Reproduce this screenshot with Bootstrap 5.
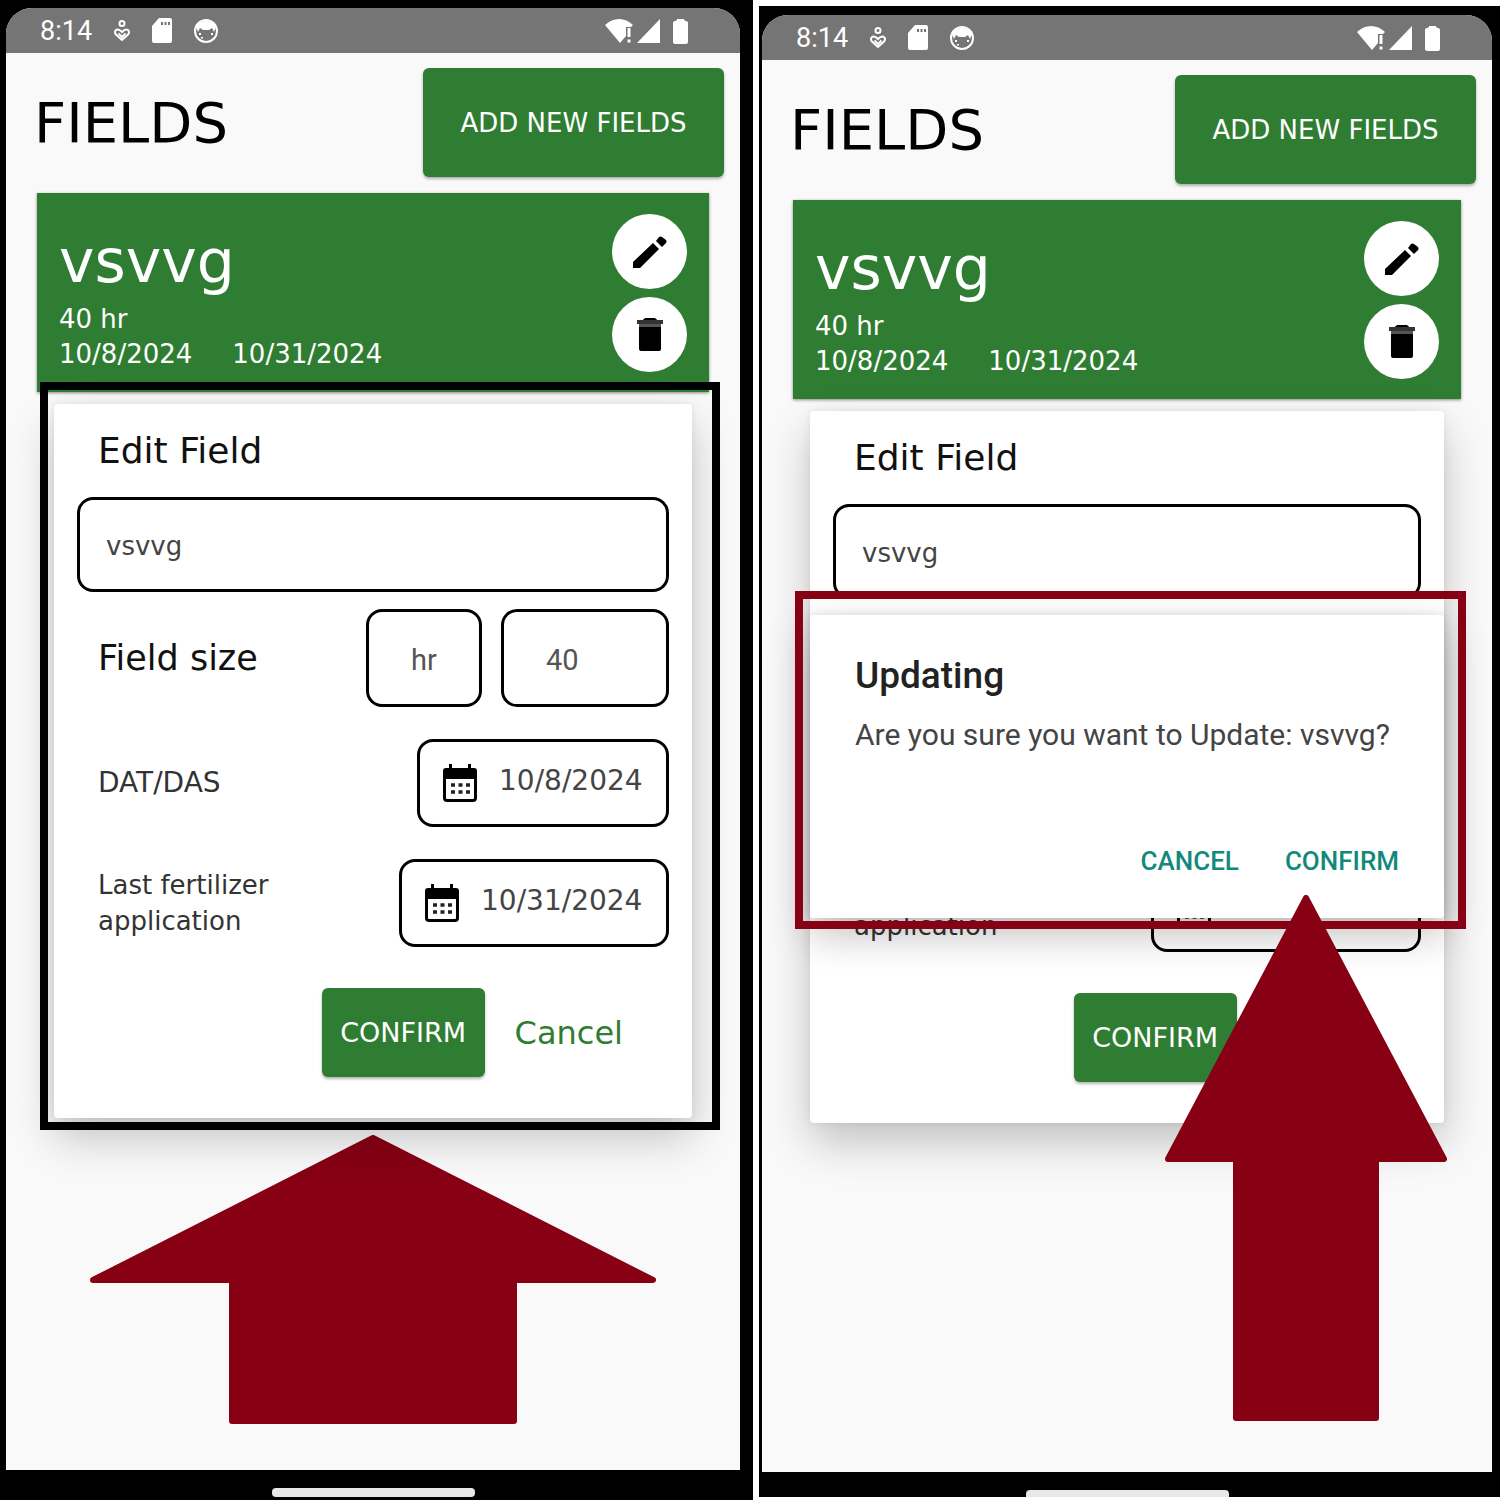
<!DOCTYPE html>
<html lang="en">
<head>
<meta charset="utf-8">
<meta name="viewport" content="width=device-width, initial-scale=1">
<title>Fields</title>
<link href="https://cdn.jsdelivr.net/npm/bootstrap@5.3.0/dist/css/bootstrap.min.css" rel="stylesheet">
<style>
:root { --leaf: #2f7d32; --marker: #870014; --ui: "DejaVu Sans", sans-serif; }
body { font-family: var(--ui); font-size: 26px; line-height: 36px; color: #000; background: #fff; }
button, input, select { font-family: inherit; }
.stage { min-height: 100vh; gap: 6px; }
.phone { background: #000; flex: 734 1 0; min-width: 0; padding: 8px 13px 0 6px; }
.phone-b { flex-grow: 730; margin: 6px 0 3px; padding: 9px 8px 0 3px; }
.viewport { background: #f9f9f9; border-radius: 26px 26px 0 0; overflow: hidden; }
.statusbar { background: #757575; color: #fff; height: 45px; padding: 0 52px 0 34px; font: 27px/44px Roboto, sans-serif; }
.status-left { gap: 21px; }
.status-right { gap: 4px; }
.battery { margin-left: 9px; }
.top-title { font-size: 56px; line-height: 64px; font-weight: 400; }
.top-area { padding: 15px 16px 16px 28px; }
.btn-leaf { background: var(--leaf); color: #fff; border: 0; border-radius: 6px; font-size: 26px; box-shadow: 0 2px 3px rgba(0,0,0,.3); }
.btn-leaf:hover { background: #276a2a; color: #fff; }
.btn-add { width: 301px; height: 109px; padding: 2px 0 0; }
.field-item { background: var(--leaf); color: #fff; margin: 0 31px 12px; height: 199px; padding: 21px 22px 0; box-shadow: 0 1px 3px rgba(0,0,0,.45); }
.field-text { padding-top: 6px; }
.field-name { font-size: 60px; line-height: 82px; font-weight: 400; }
.field-item .meta { line-height: 35px; }
.round-btn { width: 75px; height: 75px; border-radius: 50%; background: #fff; }
.edit-wrap { margin: 0 48px; }
.edit-form { background: #fff; border-radius: 4px; padding: 0 23px 41px; box-shadow: 0 20px 44px rgba(0,0,0,.22), 0 0 8px rgba(0,0,0,.08); }
.edit-form h2 { font-size: 36px; line-height: 93px; font-weight: 400; margin: 0; padding-left: 21px; color: #111; }
.edit-form label { padding-left: 21px; color: #333; }
.edit-form .size-label { font-size: 35px; color: #111; }
.edit-form .das-label { font-size: 28px; }
.boxed { border: 3px solid #000; border-radius: 16px; background: #fff; color: #444; outline: 0; }
.name-box { height: 95px; padding: 3px 26px 0; }
.size-row { margin-top: 17px; gap: 19px; }
.unit-box, .amount-box { height: 98px; font-family: Roboto, sans-serif; font-size: 29px; font-weight: 400; color: #555; appearance: none; padding: 3px 0 0 42px; }
.unit-box { width: 116px; }
.amount-box { width: 168px; }
.date-row { margin-top: 32px; }
.date-box { width: 252px; height: 88px; padding: 0 12px 0 23px; gap: 22px; }
.date-box.wide { width: 270px; }
.date-box input { font-size: 28px; line-height: 36px; border: 0; padding: 0; outline: 0; flex: 1; min-width: 0; color: #444; background: transparent; margin-bottom: 5px; }
.actions { margin-top: 41px; padding-right: 46px; gap: 30px; }
.btn-ok { width: 163px; height: 89px; padding: 2px 0 0; font-size: 27px; }
.btn-plain { font-size: 32px; color: var(--leaf); padding: 0; border: 0; }
.phone-b .date-row { margin-top: 31px; }
.marker-frame { position: absolute; border: 8px solid #000; pointer-events: none; }
.around-form { inset: -22px -28px -12px -14px; }
.around-dialog { inset: -24px -22px -11px -15px; border-color: var(--marker); }
.arrow-up { display: block; margin: 17px auto 0; }
.ask { position: absolute; top: 204px; left: 0; right: 0; height: 303px; background: #fff; border-radius: 3px; padding: 38px 34px 33px 45px; font-family: Roboto, sans-serif; box-shadow: 0 16px 40px rgba(0,0,0,.26), 0 0 8px rgba(0,0,0,.1); }
.ask h3 { font-size: 37px; line-height: 46px; font-weight: 500; color: #222; margin: 0 0 16px; }
.ask p { font-size: 30px; line-height: 40px; color: #444; white-space: nowrap; margin: 0; }
.ask .btn { font-size: 26px; line-height: 36px; font-weight: 500; color: #12897b; border: 0; padding: 2px 11px 6px; font-family: Roboto, sans-serif; }
.arrow-tall { position: absolute; top: 280px; right: -3px; pointer-events: none; }
.navzone { height: 30px; padding-top: 18px; }
.phone-b .navzone { height: 25px; }
.pill { width: 203px; height: 9px; border-radius: 4px; background: #e8e8e8; }
.phone-b .pill { height: 7px; border-radius: 4px 4px 0 0; }
</style>
<script src="https://cdn.jsdelivr.net/npm/bootstrap@5.3.0/dist/js/bootstrap.bundle.min.js"></script>
</head>
<body>
<svg width="0" height="0" class="position-absolute" aria-hidden="true">
  <symbol id="i-care" viewBox="0 0 18 24"><g fill="none" stroke="#fff" stroke-width="2"><circle cx="9" cy="4.500" r="2.500"/><path d="M9 21 3 15.500C0 12 4 8 9 13c5-5 9-1 6 2.500z"/><path d="M5.500 14.500 9 18l3.500-3.500"/></g></symbol>
  <symbol id="i-sd" viewBox="0 0 20 26"><path fill="#fff" d="M7 0h11a2 2 0 0 1 2 2v21a2 2 0 0 1-2 2H2a2 2 0 0 1-2-2V8z"/><path stroke="#757575" stroke-width="3" d="M9 5.500h2M12.500 5.500h2M16 5.500h2"/></symbol>
  <symbol id="i-cat" viewBox="0 0 26 26"><circle cx="13" cy="13" r="11" fill="none" stroke="#fff" stroke-width="2"/><path fill="#fff" d="M3 9C6 1 20 1 23 9l-2 5-2-4-3 2h-6L7 10l-2 4z"/><path fill="#fff" d="M6 15h2v2H6zM8 19h2v1.500H8zM18 15h2v2h-2z"/></symbol>
  <symbol id="i-wifi" viewBox="0 0 28 26"><path fill="#fff" d="M0 7C8-1 20-1 28 7l-2 2h-5v9l-6 7z"/><path stroke="#757575" stroke-width="5" d="M24 9v17"/><path stroke="#fff" stroke-width="3" d="M24 10v9M24 21.500v3"/></symbol>
  <symbol id="i-cell" viewBox="0 0 23 24"><path fill="#fff" d="M23 0v24H0z"/></symbol>
  <symbol id="i-batt" viewBox="0 0 15 26"><path fill="#fff" d="M4 2V1h7v1l4 2v20a2 2 0 0 1-2 2H2a2 2 0 0 1-2-2V4z"/></symbol>
  <symbol id="i-pen" viewBox="0 0 36 36"><path d="M1 34v-6L21 9l6 6L8 34zM24 7l3-4q1-1 3 0l4 3q1 2 0 3l-4 4z"/></symbol>
  <symbol id="i-bin" viewBox="0 0 26 33"><path fill="#333" d="M0 2h6l1-1h12l1 1h6v4H0z"/><path fill="#555" d="M2 6h22v4H2z"/><path d="M6 2 8 0h10l2 2zM2 9h22v22q0 2-2 2H4q-2 0-2-2z"/></symbol>
  <symbol id="i-cal" viewBox="0 0 34 38"><path d="M6 0h3v4h16V0h3v4h3q3 0 3 3v27q0 4-4 4H4q-4 0-4-4V7q0-3 3-3h3zM3 15v19q0 1 1 1h26q1 0 1-1V15z" fill-rule="evenodd"/><path d="M8 21h19M8 28h19" stroke="#222" stroke-width="3.500" stroke-dasharray="4 3.500"/></symbol>
</svg>

<main class="stage d-flex">
  <section class="phone d-flex flex-column">
    <div class="viewport flex-grow-1">
      <div class="statusbar d-flex align-items-center justify-content-between">
        <div class="status-left d-flex align-items-center">
          <span>8:14</span>
          <svg width="18" height="24"><use href="#i-care"/></svg>
          <svg width="20" height="26"><use href="#i-sd"/></svg>
          <svg width="26" height="26"><use href="#i-cat"/></svg>
        </div>
        <div class="status-right d-flex align-items-center">
          <svg width="28" height="26"><use href="#i-wifi"/></svg>
          <svg width="23" height="24"><use href="#i-cell"/></svg>
          <svg class="battery" width="15" height="26"><use href="#i-batt"/></svg>
        </div>
      </div>
      <header class="top-area d-flex justify-content-between align-items-center">
        <h1 class="top-title m-0">FIELDS</h1>
        <button type="button" class="btn btn-leaf btn-add">ADD NEW FIELDS</button>
      </header>
      <article class="field-item d-flex justify-content-between">
        <div class="field-text">
          <h2 class="field-name m-0">vsvvg</h2>
          <div class="meta">40 hr</div>
          <div class="meta d-flex gap-4"><span class="me-3">10/8/2024</span><span>10/31/2024</span></div>
        </div>
        <div class="d-flex flex-column gap-2">
          <button type="button" class="btn round-btn p-0 border-0" aria-label="Edit"><svg width="36" height="36"><use href="#i-pen"/></svg></button>
          <button type="button" class="btn round-btn p-0 border-0" aria-label="Delete"><svg width="26" height="33"><use href="#i-bin"/></svg></button>
        </div>
      </article>
      <div class="edit-wrap position-relative">
        <form class="edit-form">
          <h2>Edit Field</h2>
          <input class="boxed name-box w-100 d-block" aria-label="Field name" value="vsvvg">
          <div class="size-row d-flex align-items-center">
            <label class="size-label me-auto" for="amount-a">Field size</label>
            <select class="boxed unit-box" aria-label="Unit"><option>hr</option></select>
            <input class="boxed amount-box" id="amount-a" value="40">
          </div>
          <div class="date-row d-flex align-items-center justify-content-between">
            <label class="das-label" for="das-a">DAT/DAS</label>
            <div class="boxed date-box d-flex align-items-center"><svg width="34" height="38"><use href="#i-cal"/></svg><input id="das-a" value="10/8/2024"></div>
          </div>
          <div class="date-row d-flex align-items-center justify-content-between">
            <label for="fert-a">Last fertilizer<br>application</label>
            <div class="boxed date-box wide d-flex align-items-center"><svg width="34" height="38"><use href="#i-cal"/></svg><input id="fert-a" value="10/31/2024"></div>
          </div>
          <div class="actions d-flex justify-content-end align-items-center">
            <button type="button" class="btn btn-leaf btn-ok">CONFIRM</button>
            <button type="button" class="btn btn-plain">Cancel</button>
          </div>
        </form>
        <div class="marker-frame around-form"></div>
      </div>
      <svg class="arrow-up" width="566" height="289" viewBox="0 0 566 289" role="img" aria-label="Arrow to the edit form"><path fill="#870014" stroke="#870014" stroke-width="6" stroke-linejoin="round" d="M283 3 563 145H424v141H142V145H3z"/></svg>
    </div>
    <div class="navzone"><div class="pill mx-auto"></div></div>
  </section>

  <section class="phone phone-b d-flex flex-column">
    <div class="viewport flex-grow-1">
      <div class="statusbar d-flex align-items-center justify-content-between">
        <div class="status-left d-flex align-items-center">
          <span>8:14</span>
          <svg width="18" height="24"><use href="#i-care"/></svg>
          <svg width="20" height="26"><use href="#i-sd"/></svg>
          <svg width="26" height="26"><use href="#i-cat"/></svg>
        </div>
        <div class="status-right d-flex align-items-center">
          <svg width="28" height="26"><use href="#i-wifi"/></svg>
          <svg width="23" height="24"><use href="#i-cell"/></svg>
          <svg class="battery" width="15" height="26"><use href="#i-batt"/></svg>
        </div>
      </div>
      <header class="top-area d-flex justify-content-between align-items-center">
        <h1 class="top-title m-0">FIELDS</h1>
        <button type="button" class="btn btn-leaf btn-add">ADD NEW FIELDS</button>
      </header>
      <article class="field-item d-flex justify-content-between">
        <div class="field-text">
          <h2 class="field-name m-0">vsvvg</h2>
          <div class="meta">40 hr</div>
          <div class="meta d-flex gap-4"><span class="me-3">10/8/2024</span><span>10/31/2024</span></div>
        </div>
        <div class="d-flex flex-column gap-2">
          <button type="button" class="btn round-btn p-0 border-0" aria-label="Edit"><svg width="36" height="36"><use href="#i-pen"/></svg></button>
          <button type="button" class="btn round-btn p-0 border-0" aria-label="Delete"><svg width="26" height="33"><use href="#i-bin"/></svg></button>
        </div>
      </article>
      <div class="edit-wrap position-relative">
        <form class="edit-form">
          <h2>Edit Field</h2>
          <input class="boxed name-box w-100 d-block" aria-label="Field name" value="vsvvg">
          <div class="size-row d-flex align-items-center invisible">
            <label class="size-label me-auto" for="amount-b">Field size</label>
            <select class="boxed unit-box" aria-label="Unit"><option>hr</option></select>
            <input class="boxed amount-box" id="amount-b" value="40">
          </div>
          <div class="date-row d-flex align-items-center justify-content-between invisible">
            <label class="das-label" for="das-b">DAT/DAS</label>
            <div class="boxed date-box d-flex align-items-center"><svg width="34" height="38"><use href="#i-cal"/></svg><input id="das-b" value="10/8/2024"></div>
          </div>
          <div class="date-row d-flex align-items-center justify-content-between">
            <label for="fert-b">Last fertilizer<br>application</label>
            <div class="boxed date-box wide d-flex align-items-center"><svg width="34" height="38"><use href="#i-cal"/></svg><input id="fert-b" value="10/31/2024"></div>
          </div>
          <div class="actions d-flex justify-content-end align-items-center">
            <button type="button" class="btn btn-leaf btn-ok">CONFIRM</button>
            <button type="button" class="btn btn-plain">Cancel</button>
          </div>
        </form>
        <div class="ask d-flex flex-column" role="dialog" aria-labelledby="ask-title">
          <h3 id="ask-title">Updating</h3>
          <p>Are you sure you want to Update: vsvvg?</p>
          <div class="d-flex justify-content-end gap-4 mt-auto">
            <button type="button" class="btn">CANCEL</button>
            <button type="button" class="btn">CONFIRM</button>
          </div>
          <div class="marker-frame around-dialog"></div>
          <svg class="arrow-tall" width="282" height="526" viewBox="0 0 282 526" role="img" aria-label="Arrow to Confirm"><path fill="#870014" stroke="#870014" stroke-width="6" stroke-linejoin="round" d="M141 3 279 264H211v259H71V264H3z"/></svg>
        </div>
      </div>
    </div>
    <div class="navzone"><div class="pill mx-auto"></div></div>
  </section>
</main>
</body>
</html>
